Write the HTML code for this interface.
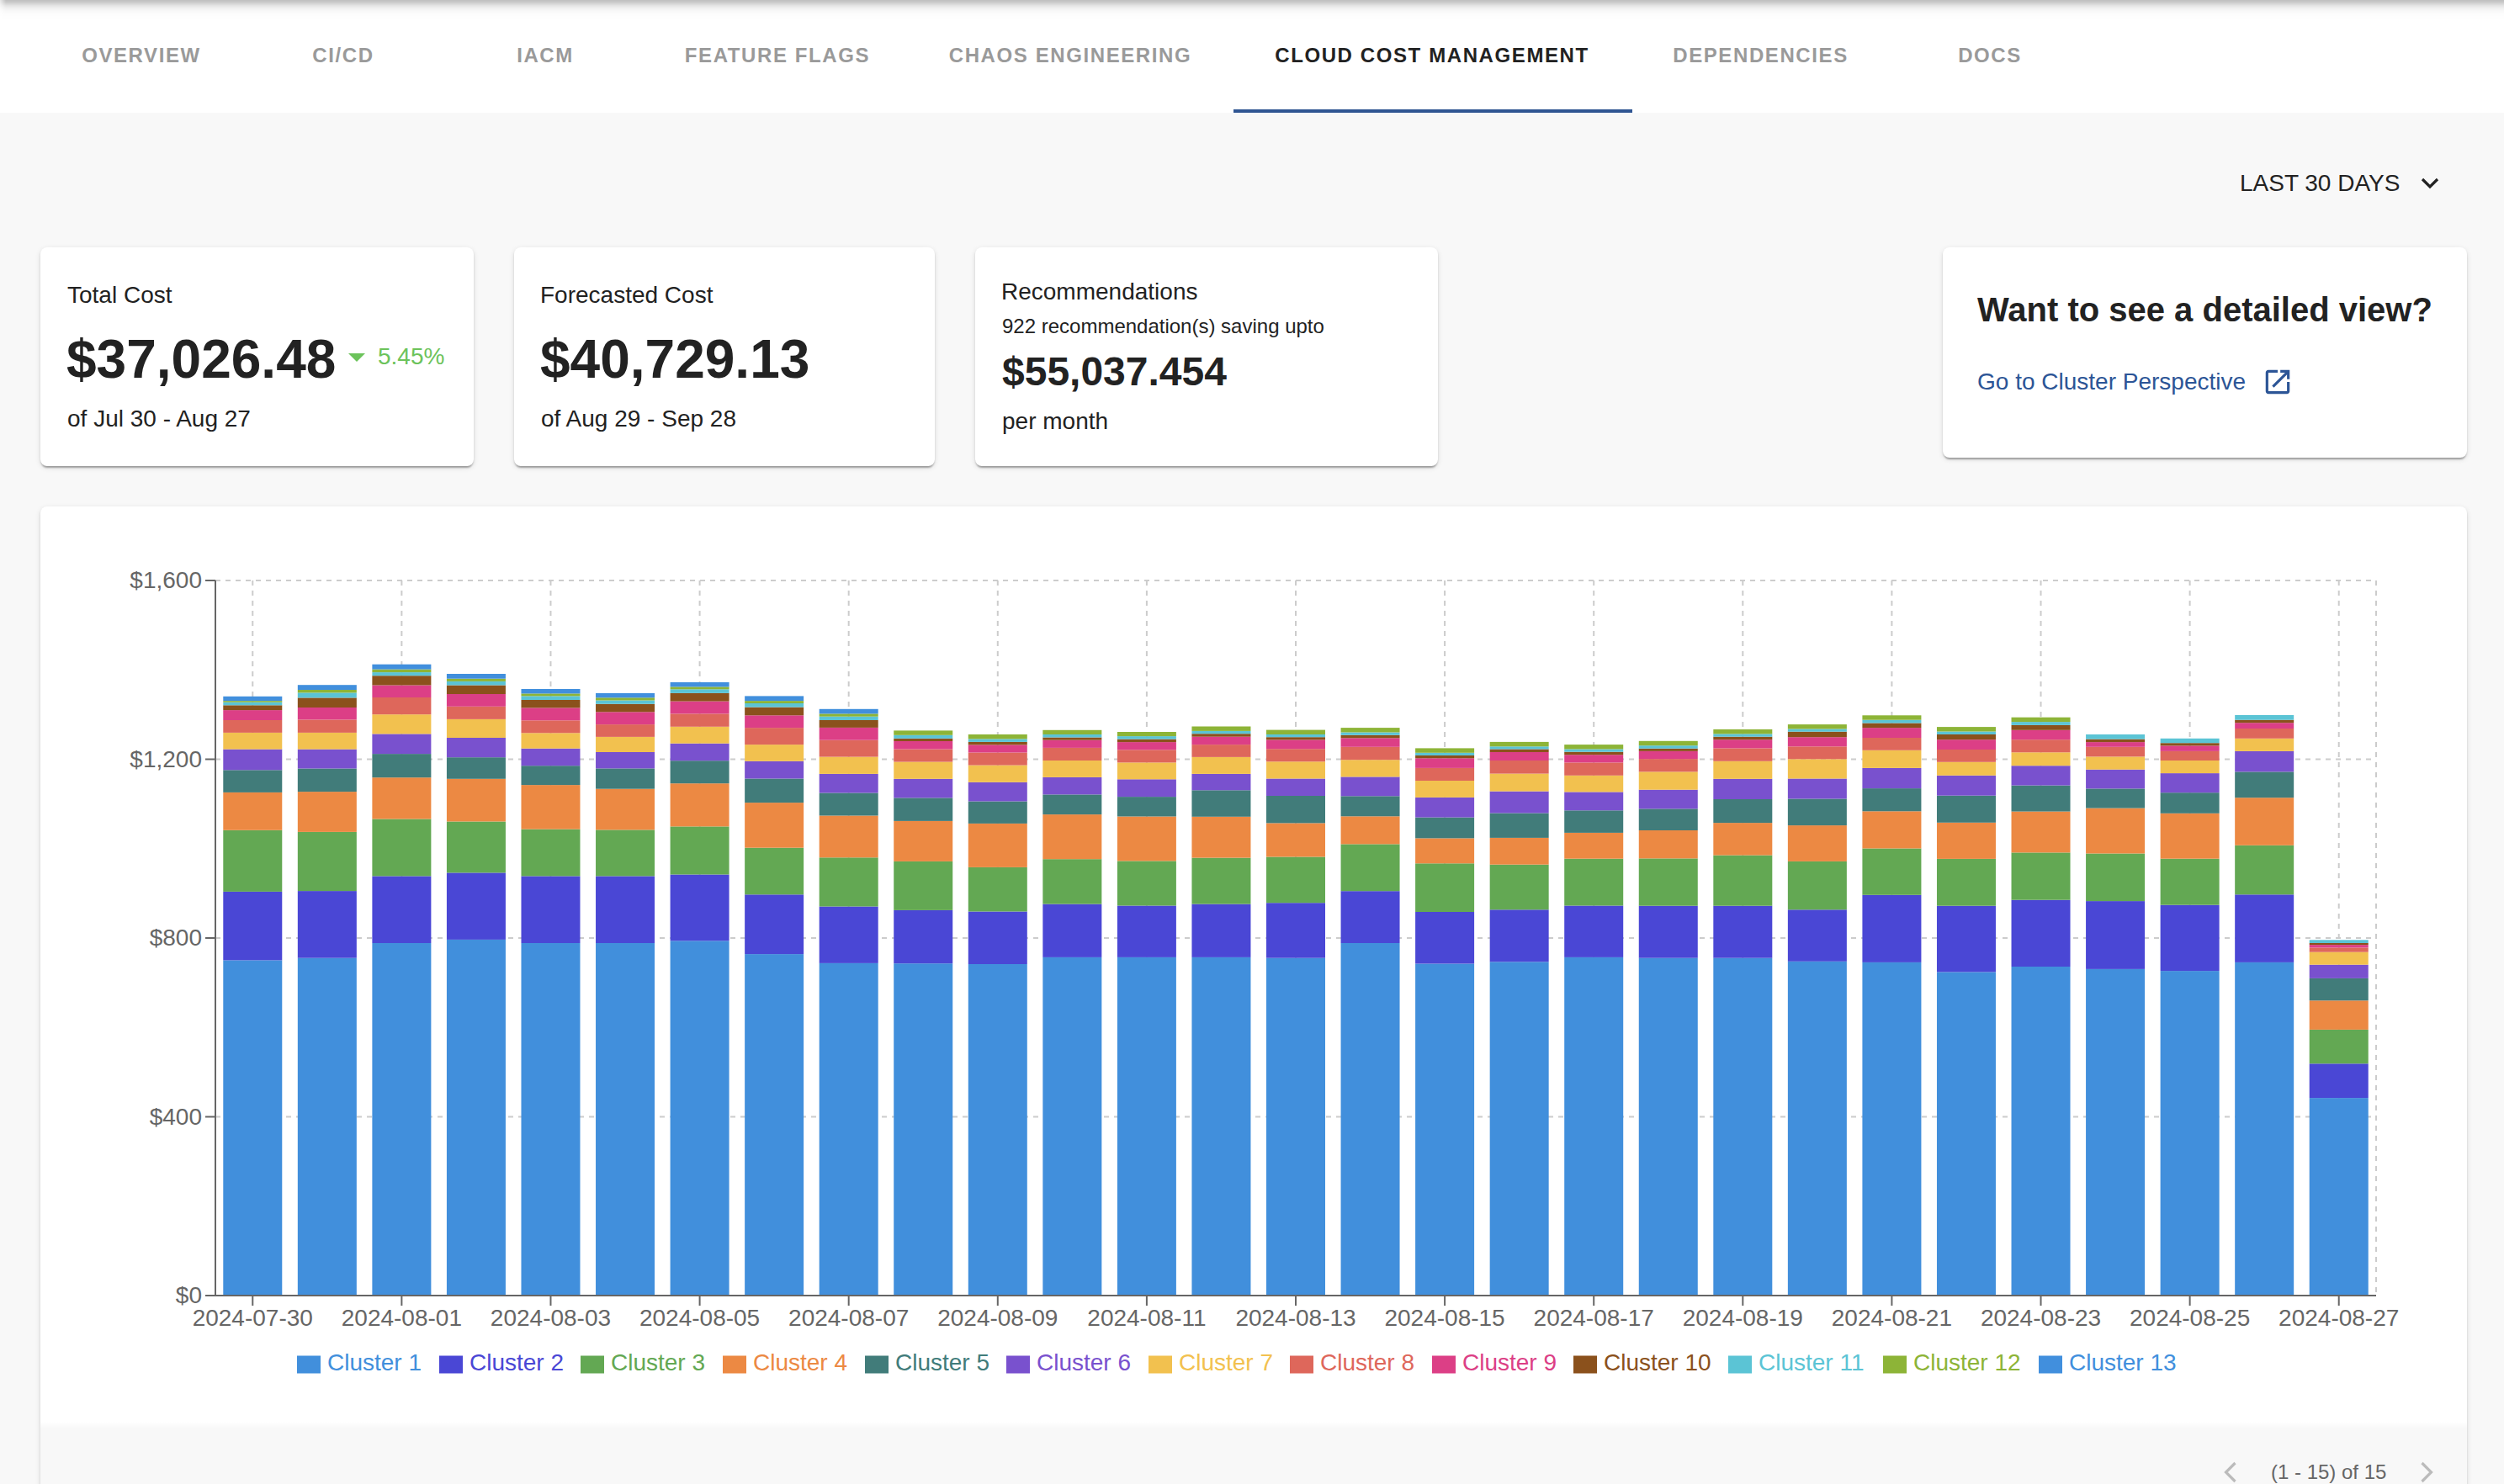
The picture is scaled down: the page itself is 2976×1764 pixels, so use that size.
<!DOCTYPE html>
<html><head><meta charset="utf-8">
<style>
html,body{margin:0;padding:0;}
body{width:2976px;height:1764px;overflow:hidden;position:relative;background:#f8f8f8;font-family:"Liberation Sans",sans-serif;color:#222;}
.abs{position:absolute;white-space:nowrap;}
#hdr{position:absolute;left:0;top:0;width:2976px;height:134px;background:#fff;}
#shadow{position:absolute;left:0;top:0;width:2976px;height:24px;background:linear-gradient(to bottom,rgba(0,0,0,0.25) 0px,rgba(0,0,0,0.21) 2.5px,rgba(0,0,0,0.16) 4.5px,rgba(0,0,0,0.11) 6.5px,rgba(0,0,0,0.075) 8.5px,rgba(0,0,0,0.05) 10.5px,rgba(0,0,0,0.031) 12.5px,rgba(0,0,0,0.02) 14.5px,rgba(0,0,0,0.012) 16.5px,rgba(0,0,0,0.004) 20.5px,rgba(0,0,0,0) 23px);-webkit-mask-image:linear-gradient(to right,rgba(0,0,0,0.35),#000 7px);mask-image:linear-gradient(to right,rgba(0,0,0,0.35),#000 7px);}
.tab{position:absolute;top:0;height:134px;font-size:24px;font-weight:bold;letter-spacing:1.6px;color:#9a9a9a;text-align:center;line-height:24px;}
.tab span{position:absolute;left:0;right:0;top:53.7px;}
.tab.act{color:#222;}
#ul{position:absolute;left:1466px;top:130px;width:474px;height:4px;background:#2f5592;}
.card{position:absolute;background:#fff;border-radius:8px;box-shadow:0 4px 2px -2px rgba(0,0,0,0.2),0 2px 2px 0 rgba(0,0,0,0.14),0 2px 6px 0 rgba(0,0,0,0.12);}
.t28{font-size:28px;line-height:28px;}
.t24{font-size:24px;line-height:24px;}
.big{font-size:64px;line-height:64px;font-weight:bold;}
svg text.ax{font-family:"Liberation Sans",sans-serif;font-size:28px;fill:#666;}
svg text.lg{font-family:"Liberation Sans",sans-serif;font-size:28px;}
@media (max-width:2000px){html{zoom:0.5;}}
</style></head><body>
<div id="hdr"></div>
<div id="shadow"></div>
<div class="tab" style="left:48px;width:240px;"><span>OVERVIEW</span></div>
<div class="tab" style="left:288px;width:240px;"><span>CI/CD</span></div>
<div class="tab" style="left:528px;width:240px;"><span>IACM</span></div>
<div class="tab" style="left:768px;width:312px;"><span>FEATURE FLAGS</span></div>
<div class="tab" style="left:1080px;width:384px;"><span>CHAOS ENGINEERING</span></div>
<div class="tab act" style="left:1464px;width:476px;"><span>CLOUD COST MANAGEMENT</span></div>
<div class="tab" style="left:1940px;width:305px;"><span>DEPENDENCIES</span></div>
<div class="tab" style="left:2245px;width:240px;"><span>DOCS</span></div>
<div id="ul"></div>

<div class="abs t28" style="left:2662px;top:204.3px;">LAST 30 DAYS</div>
<svg class="abs" style="left:2870px;top:202px;" width="36" height="32" viewBox="0 0 36 32"><path d="M9 11 L18 20 L27 11" fill="none" stroke="#222" stroke-width="3.2"/></svg>

<div class="card" style="left:48px;top:294px;width:515px;height:260px;"></div>
<div class="abs t28" style="left:80px;top:337.3px;">Total Cost</div>
<div class="abs big" style="left:79px;top:395.3px;">$37,026.48</div>
<svg class="abs" style="left:414px;top:420px;" width="20" height="10" viewBox="0 0 20 10"><path d="M0 0 H20 L10 10 Z" fill="#6cc35b"/></svg>
<div class="abs t28" style="left:449px;top:410.3px;color:#6cc35b;">5.45%</div>
<div class="abs t28" style="left:80px;top:484.3px;">of Jul 30 - Aug 27</div>

<div class="card" style="left:611px;top:294px;width:500px;height:260px;"></div>
<div class="abs t28" style="left:642px;top:337.3px;">Forecasted Cost</div>
<div class="abs big" style="left:642px;top:395.3px;">$40,729.13</div>
<div class="abs t28" style="left:643px;top:484.3px;">of Aug 29 - Sep 28</div>

<div class="card" style="left:1159px;top:294px;width:550px;height:260px;"></div>
<div class="abs t28" style="left:1190px;top:333.3px;">Recommendations</div>
<div class="abs t24" style="left:1191px;top:375.7px;">922 recommendation(s) saving upto</div>
<div class="abs" style="left:1191px;top:418.4px;font-size:48px;line-height:48px;font-weight:bold;">$55,037.454</div>
<div class="abs t28" style="left:1191px;top:486.8px;">per month</div>

<div class="card" style="left:2309px;top:294px;width:623px;height:250px;"></div>
<div class="abs" style="left:2350px;top:348.1px;font-size:40px;line-height:40px;font-weight:bold;">Want to see a detailed view?</div>
<div class="abs t28" style="left:2350px;top:440.3px;color:#2c5596;">Go to Cluster Perspective</div>
<svg class="abs" style="left:2688px;top:435px;" width="38" height="38" viewBox="0 0 24 24"><path fill="#2c5596" d="M19 19H5V5h7V3H5c-1.11 0-2 .9-2 2v14c0 1.1.89 2 2 2h14c1.1 0 2-.9 2-2v-7h-2v7zM14 3v2h3.59l-9.83 9.83 1.41 1.41L19 6.41V10h2V3h-7z"/></svg>

<div class="card" style="left:48px;top:602px;width:2884px;height:1300px;background:#fff;"></div>
<div class="abs" style="left:48px;top:1690px;width:2884px;height:80px;background:linear-gradient(to bottom,rgba(248,248,248,0) 0px,#f8f8f8 8px);"></div>
<svg class="abs" style="left:0;top:0;" width="2976" height="1764" viewBox="0 0 2976 1764">
<line x1="256.0" y1="690.0" x2="2824.0" y2="690.0" stroke="#ccc" stroke-width="2" stroke-dasharray="6 6"/>
<line x1="256.0" y1="902.5" x2="2824.0" y2="902.5" stroke="#ccc" stroke-width="2" stroke-dasharray="6 6"/>
<line x1="256.0" y1="1115.0" x2="2824.0" y2="1115.0" stroke="#ccc" stroke-width="2" stroke-dasharray="6 6"/>
<line x1="256.0" y1="1327.5" x2="2824.0" y2="1327.5" stroke="#ccc" stroke-width="2" stroke-dasharray="6 6"/>
<line x1="300.28" y1="690.0" x2="300.28" y2="1540.0" stroke="#ccc" stroke-width="2" stroke-dasharray="6 6"/>
<line x1="477.38" y1="690.0" x2="477.38" y2="1540.0" stroke="#ccc" stroke-width="2" stroke-dasharray="6 6"/>
<line x1="654.48" y1="690.0" x2="654.48" y2="1540.0" stroke="#ccc" stroke-width="2" stroke-dasharray="6 6"/>
<line x1="831.59" y1="690.0" x2="831.59" y2="1540.0" stroke="#ccc" stroke-width="2" stroke-dasharray="6 6"/>
<line x1="1008.69" y1="690.0" x2="1008.69" y2="1540.0" stroke="#ccc" stroke-width="2" stroke-dasharray="6 6"/>
<line x1="1185.79" y1="690.0" x2="1185.79" y2="1540.0" stroke="#ccc" stroke-width="2" stroke-dasharray="6 6"/>
<line x1="1362.9" y1="690.0" x2="1362.9" y2="1540.0" stroke="#ccc" stroke-width="2" stroke-dasharray="6 6"/>
<line x1="1540" y1="690.0" x2="1540" y2="1540.0" stroke="#ccc" stroke-width="2" stroke-dasharray="6 6"/>
<line x1="1717.1" y1="690.0" x2="1717.1" y2="1540.0" stroke="#ccc" stroke-width="2" stroke-dasharray="6 6"/>
<line x1="1894.21" y1="690.0" x2="1894.21" y2="1540.0" stroke="#ccc" stroke-width="2" stroke-dasharray="6 6"/>
<line x1="2071.31" y1="690.0" x2="2071.31" y2="1540.0" stroke="#ccc" stroke-width="2" stroke-dasharray="6 6"/>
<line x1="2248.41" y1="690.0" x2="2248.41" y2="1540.0" stroke="#ccc" stroke-width="2" stroke-dasharray="6 6"/>
<line x1="2425.52" y1="690.0" x2="2425.52" y2="1540.0" stroke="#ccc" stroke-width="2" stroke-dasharray="6 6"/>
<line x1="2602.62" y1="690.0" x2="2602.62" y2="1540.0" stroke="#ccc" stroke-width="2" stroke-dasharray="6 6"/>
<line x1="2779.72" y1="690.0" x2="2779.72" y2="1540.0" stroke="#ccc" stroke-width="2" stroke-dasharray="6 6"/>
<line x1="2824.0" y1="690.0" x2="2824.0" y2="1540.0" stroke="#ccc" stroke-width="2" stroke-dasharray="6 6"/>
<rect x="265.28" y="1141.4" width="70" height="398.6" fill="#418fdc"/>
<rect x="265.28" y="1059.9" width="70" height="81.5" fill="#4a47d5"/>
<rect x="265.28" y="986.8" width="70" height="73.1" fill="#63a853"/>
<rect x="265.28" y="941.9" width="70" height="44.9" fill="#ec8943"/>
<rect x="265.28" y="915.3" width="70" height="26.6" fill="#417c7a"/>
<rect x="265.28" y="890.6" width="70" height="24.7" fill="#7951ce"/>
<rect x="265.28" y="870.9" width="70" height="19.7" fill="#f2c14f"/>
<rect x="265.28" y="856" width="70" height="14.9" fill="#de675b"/>
<rect x="265.28" y="844.1" width="70" height="11.9" fill="#dc3f86"/>
<rect x="265.28" y="838.3" width="70" height="5.8" fill="#8b511c"/>
<rect x="265.28" y="834.7" width="70" height="3.6" fill="#5bc4d5"/>
<rect x="265.28" y="833.1" width="70" height="1.6" fill="#8db437"/>
<rect x="265.28" y="827.8" width="70" height="5.3" fill="#418fdd"/>
<rect x="353.83" y="1138.7" width="70" height="401.3" fill="#418fdc"/>
<rect x="353.83" y="1059.1" width="70" height="79.6" fill="#4a47d5"/>
<rect x="353.83" y="988.9" width="70" height="70.2" fill="#63a853"/>
<rect x="353.83" y="941.1" width="70" height="47.8" fill="#ec8943"/>
<rect x="353.83" y="913.5" width="70" height="27.6" fill="#417c7a"/>
<rect x="353.83" y="890.6" width="70" height="22.9" fill="#7951ce"/>
<rect x="353.83" y="870.9" width="70" height="19.7" fill="#f2c14f"/>
<rect x="353.83" y="855.4" width="70" height="15.5" fill="#de675b"/>
<rect x="353.83" y="841" width="70" height="14.4" fill="#dc3f86"/>
<rect x="353.83" y="829.4" width="70" height="11.6" fill="#8b511c"/>
<rect x="353.83" y="823.4" width="70" height="6" fill="#5bc4d5"/>
<rect x="353.83" y="820" width="70" height="3.4" fill="#8db437"/>
<rect x="353.83" y="814.2" width="70" height="5.8" fill="#418fdd"/>
<rect x="442.38" y="1121" width="70" height="419" fill="#418fdc"/>
<rect x="442.38" y="1041.4" width="70" height="79.6" fill="#4a47d5"/>
<rect x="442.38" y="973.5" width="70" height="67.9" fill="#63a853"/>
<rect x="442.38" y="924.2" width="70" height="49.3" fill="#ec8943"/>
<rect x="442.38" y="896.1" width="70" height="28.1" fill="#417c7a"/>
<rect x="442.38" y="872.4" width="70" height="23.7" fill="#7951ce"/>
<rect x="442.38" y="849.2" width="70" height="23.2" fill="#f2c14f"/>
<rect x="442.38" y="829" width="70" height="20.2" fill="#de675b"/>
<rect x="442.38" y="814.5" width="70" height="14.5" fill="#dc3f86"/>
<rect x="442.38" y="803.2" width="70" height="11.3" fill="#8b511c"/>
<rect x="442.38" y="799.1" width="70" height="4.1" fill="#5bc4d5"/>
<rect x="442.38" y="795.6" width="70" height="3.5" fill="#8db437"/>
<rect x="442.38" y="789.7" width="70" height="5.9" fill="#418fdd"/>
<rect x="530.93" y="1116.9" width="70" height="423.1" fill="#418fdc"/>
<rect x="530.93" y="1037.4" width="70" height="79.5" fill="#4a47d5"/>
<rect x="530.93" y="976.5" width="70" height="60.9" fill="#63a853"/>
<rect x="530.93" y="925.8" width="70" height="50.7" fill="#ec8943"/>
<rect x="530.93" y="900.2" width="70" height="25.6" fill="#417c7a"/>
<rect x="530.93" y="877" width="70" height="23.2" fill="#7951ce"/>
<rect x="530.93" y="854.9" width="70" height="22.1" fill="#f2c14f"/>
<rect x="530.93" y="839.8" width="70" height="15.1" fill="#de675b"/>
<rect x="530.93" y="825" width="70" height="14.8" fill="#dc3f86"/>
<rect x="530.93" y="814.5" width="70" height="10.5" fill="#8b511c"/>
<rect x="530.93" y="809.9" width="70" height="4.6" fill="#5bc4d5"/>
<rect x="530.93" y="806.7" width="70" height="3.2" fill="#8db437"/>
<rect x="530.93" y="801" width="70" height="5.7" fill="#418fdd"/>
<rect x="619.48" y="1121" width="70" height="419" fill="#418fdc"/>
<rect x="619.48" y="1041.4" width="70" height="79.6" fill="#4a47d5"/>
<rect x="619.48" y="985.6" width="70" height="55.8" fill="#63a853"/>
<rect x="619.48" y="933.1" width="70" height="52.5" fill="#ec8943"/>
<rect x="619.48" y="910.2" width="70" height="22.9" fill="#417c7a"/>
<rect x="619.48" y="889.7" width="70" height="20.5" fill="#7951ce"/>
<rect x="619.48" y="871.3" width="70" height="18.4" fill="#f2c14f"/>
<rect x="619.48" y="856.3" width="70" height="15" fill="#de675b"/>
<rect x="619.48" y="841.4" width="70" height="14.9" fill="#dc3f86"/>
<rect x="619.48" y="832" width="70" height="9.4" fill="#8b511c"/>
<rect x="619.48" y="827.4" width="70" height="4.6" fill="#5bc4d5"/>
<rect x="619.48" y="824.4" width="70" height="3" fill="#8db437"/>
<rect x="619.48" y="819" width="70" height="5.4" fill="#418fdd"/>
<rect x="708.03" y="1121" width="70" height="419" fill="#418fdc"/>
<rect x="708.03" y="1041.4" width="70" height="79.6" fill="#4a47d5"/>
<rect x="708.03" y="986.4" width="70" height="55" fill="#63a853"/>
<rect x="708.03" y="937.7" width="70" height="48.7" fill="#ec8943"/>
<rect x="708.03" y="913.4" width="70" height="24.3" fill="#417c7a"/>
<rect x="708.03" y="894" width="70" height="19.4" fill="#7951ce"/>
<rect x="708.03" y="875.9" width="70" height="18.1" fill="#f2c14f"/>
<rect x="708.03" y="861.1" width="70" height="14.8" fill="#de675b"/>
<rect x="708.03" y="846.3" width="70" height="14.8" fill="#dc3f86"/>
<rect x="708.03" y="836.8" width="70" height="9.5" fill="#8b511c"/>
<rect x="708.03" y="832.5" width="70" height="4.3" fill="#5bc4d5"/>
<rect x="708.03" y="829.3" width="70" height="3.2" fill="#8db437"/>
<rect x="708.03" y="823.9" width="70" height="5.4" fill="#418fdd"/>
<rect x="796.59" y="1118.3" width="70" height="421.7" fill="#418fdc"/>
<rect x="796.59" y="1039.5" width="70" height="78.8" fill="#4a47d5"/>
<rect x="796.59" y="982.4" width="70" height="57.1" fill="#63a853"/>
<rect x="796.59" y="931.2" width="70" height="51.2" fill="#ec8943"/>
<rect x="796.59" y="904.2" width="70" height="27" fill="#417c7a"/>
<rect x="796.59" y="883.7" width="70" height="20.5" fill="#7951ce"/>
<rect x="796.59" y="863.8" width="70" height="19.9" fill="#f2c14f"/>
<rect x="796.59" y="848.4" width="70" height="15.4" fill="#de675b"/>
<rect x="796.59" y="833.6" width="70" height="14.8" fill="#dc3f86"/>
<rect x="796.59" y="823.9" width="70" height="9.7" fill="#8b511c"/>
<rect x="796.59" y="819.3" width="70" height="4.6" fill="#5bc4d5"/>
<rect x="796.59" y="816.4" width="70" height="2.9" fill="#8db437"/>
<rect x="796.59" y="811" width="70" height="5.4" fill="#418fdd"/>
<rect x="885.14" y="1134.1" width="70" height="405.9" fill="#418fdc"/>
<rect x="885.14" y="1063.3" width="70" height="70.8" fill="#4a47d5"/>
<rect x="885.14" y="1007.7" width="70" height="55.6" fill="#63a853"/>
<rect x="885.14" y="954.1" width="70" height="53.6" fill="#ec8943"/>
<rect x="885.14" y="925.5" width="70" height="28.6" fill="#417c7a"/>
<rect x="885.14" y="904.8" width="70" height="20.7" fill="#7951ce"/>
<rect x="885.14" y="885.1" width="70" height="19.7" fill="#f2c14f"/>
<rect x="885.14" y="865.1" width="70" height="20" fill="#de675b"/>
<rect x="885.14" y="850.3" width="70" height="14.8" fill="#dc3f86"/>
<rect x="885.14" y="840.6" width="70" height="9.7" fill="#8b511c"/>
<rect x="885.14" y="836" width="70" height="4.6" fill="#5bc4d5"/>
<rect x="885.14" y="833.1" width="70" height="2.9" fill="#8db437"/>
<rect x="885.14" y="827.4" width="70" height="5.7" fill="#418fdd"/>
<rect x="973.69" y="1144.9" width="70" height="395.1" fill="#418fdc"/>
<rect x="973.69" y="1077.5" width="70" height="67.4" fill="#4a47d5"/>
<rect x="973.69" y="1019.3" width="70" height="58.2" fill="#63a853"/>
<rect x="973.69" y="969.5" width="70" height="49.8" fill="#ec8943"/>
<rect x="973.69" y="942.5" width="70" height="27" fill="#417c7a"/>
<rect x="973.69" y="919.9" width="70" height="22.6" fill="#7951ce"/>
<rect x="973.69" y="899.6" width="70" height="20.3" fill="#f2c14f"/>
<rect x="973.69" y="879.7" width="70" height="19.9" fill="#de675b"/>
<rect x="973.69" y="864.9" width="70" height="14.8" fill="#dc3f86"/>
<rect x="973.69" y="856" width="70" height="8.9" fill="#8b511c"/>
<rect x="973.69" y="851.7" width="70" height="4.3" fill="#5bc4d5"/>
<rect x="973.69" y="848.4" width="70" height="3.3" fill="#8db437"/>
<rect x="973.69" y="842.8" width="70" height="5.6" fill="#418fdd"/>
<rect x="1062.24" y="1145.2" width="70" height="394.8" fill="#418fdc"/>
<rect x="1062.24" y="1081.9" width="70" height="63.3" fill="#4a47d5"/>
<rect x="1062.24" y="1023.9" width="70" height="58" fill="#63a853"/>
<rect x="1062.24" y="975.9" width="70" height="48" fill="#ec8943"/>
<rect x="1062.24" y="948.4" width="70" height="27.5" fill="#417c7a"/>
<rect x="1062.24" y="925.8" width="70" height="22.6" fill="#7951ce"/>
<rect x="1062.24" y="905.6" width="70" height="20.2" fill="#f2c14f"/>
<rect x="1062.24" y="890.5" width="70" height="15.1" fill="#de675b"/>
<rect x="1062.24" y="881" width="70" height="9.5" fill="#dc3f86"/>
<rect x="1062.24" y="877.8" width="70" height="3.2" fill="#8b511c"/>
<rect x="1062.24" y="873.8" width="70" height="4" fill="#5bc4d5"/>
<rect x="1062.24" y="868.4" width="70" height="5.4" fill="#8db437"/>
<rect x="1150.79" y="1146" width="70" height="394" fill="#418fdc"/>
<rect x="1150.79" y="1083.5" width="70" height="62.5" fill="#4a47d5"/>
<rect x="1150.79" y="1030.9" width="70" height="52.6" fill="#63a853"/>
<rect x="1150.79" y="978.9" width="70" height="52" fill="#ec8943"/>
<rect x="1150.79" y="952.5" width="70" height="26.4" fill="#417c7a"/>
<rect x="1150.79" y="929.8" width="70" height="22.7" fill="#7951ce"/>
<rect x="1150.79" y="909.6" width="70" height="20.2" fill="#f2c14f"/>
<rect x="1150.79" y="894.5" width="70" height="15.1" fill="#de675b"/>
<rect x="1150.79" y="885.4" width="70" height="9.1" fill="#dc3f86"/>
<rect x="1150.79" y="881.9" width="70" height="3.5" fill="#8b511c"/>
<rect x="1150.79" y="878.4" width="70" height="3.5" fill="#5bc4d5"/>
<rect x="1150.79" y="873" width="70" height="5.4" fill="#8db437"/>
<rect x="1239.34" y="1137.9" width="70" height="402.1" fill="#418fdc"/>
<rect x="1239.34" y="1074.6" width="70" height="63.3" fill="#4a47d5"/>
<rect x="1239.34" y="1021.2" width="70" height="53.4" fill="#63a853"/>
<rect x="1239.34" y="968.1" width="70" height="53.1" fill="#ec8943"/>
<rect x="1239.34" y="944.4" width="70" height="23.7" fill="#417c7a"/>
<rect x="1239.34" y="923.9" width="70" height="20.5" fill="#7951ce"/>
<rect x="1239.34" y="904" width="70" height="19.9" fill="#f2c14f"/>
<rect x="1239.34" y="888.9" width="70" height="15.1" fill="#de675b"/>
<rect x="1239.34" y="879.7" width="70" height="9.2" fill="#dc3f86"/>
<rect x="1239.34" y="876.5" width="70" height="3.2" fill="#8b511c"/>
<rect x="1239.34" y="873" width="70" height="3.5" fill="#5bc4d5"/>
<rect x="1239.34" y="867.8" width="70" height="5.2" fill="#8db437"/>
<rect x="1327.9" y="1137.9" width="70" height="402.1" fill="#418fdc"/>
<rect x="1327.9" y="1076.5" width="70" height="61.4" fill="#4a47d5"/>
<rect x="1327.9" y="1023.4" width="70" height="53.1" fill="#63a853"/>
<rect x="1327.9" y="970.5" width="70" height="52.9" fill="#ec8943"/>
<rect x="1327.9" y="947.1" width="70" height="23.4" fill="#417c7a"/>
<rect x="1327.9" y="926.3" width="70" height="20.8" fill="#7951ce"/>
<rect x="1327.9" y="906.4" width="70" height="19.9" fill="#f2c14f"/>
<rect x="1327.9" y="891.3" width="70" height="15.1" fill="#de675b"/>
<rect x="1327.9" y="882.1" width="70" height="9.2" fill="#dc3f86"/>
<rect x="1327.9" y="878.6" width="70" height="3.5" fill="#8b511c"/>
<rect x="1327.9" y="875.1" width="70" height="3.5" fill="#5bc4d5"/>
<rect x="1327.9" y="870" width="70" height="5.1" fill="#8db437"/>
<rect x="1416.45" y="1137.9" width="70" height="402.1" fill="#418fdc"/>
<rect x="1416.45" y="1074.6" width="70" height="63.3" fill="#4a47d5"/>
<rect x="1416.45" y="1019.6" width="70" height="55" fill="#63a853"/>
<rect x="1416.45" y="970.8" width="70" height="48.8" fill="#ec8943"/>
<rect x="1416.45" y="939.3" width="70" height="31.5" fill="#417c7a"/>
<rect x="1416.45" y="919.9" width="70" height="19.4" fill="#7951ce"/>
<rect x="1416.45" y="899.9" width="70" height="20" fill="#f2c14f"/>
<rect x="1416.45" y="885.1" width="70" height="14.8" fill="#de675b"/>
<rect x="1416.45" y="875.7" width="70" height="9.4" fill="#dc3f86"/>
<rect x="1416.45" y="872.2" width="70" height="3.5" fill="#8b511c"/>
<rect x="1416.45" y="868.9" width="70" height="3.3" fill="#5bc4d5"/>
<rect x="1416.45" y="863.5" width="70" height="5.4" fill="#8db437"/>
<rect x="1505" y="1138.7" width="70" height="401.3" fill="#418fdc"/>
<rect x="1505" y="1073.2" width="70" height="65.5" fill="#4a47d5"/>
<rect x="1505" y="1018.5" width="70" height="54.7" fill="#63a853"/>
<rect x="1505" y="978.4" width="70" height="40.1" fill="#ec8943"/>
<rect x="1505" y="946" width="70" height="32.4" fill="#417c7a"/>
<rect x="1505" y="925.5" width="70" height="20.5" fill="#7951ce"/>
<rect x="1505" y="905.3" width="70" height="20.2" fill="#f2c14f"/>
<rect x="1505" y="890.2" width="70" height="15.1" fill="#de675b"/>
<rect x="1505" y="879.4" width="70" height="10.8" fill="#dc3f86"/>
<rect x="1505" y="876.2" width="70" height="3.2" fill="#8b511c"/>
<rect x="1505" y="873" width="70" height="3.2" fill="#5bc4d5"/>
<rect x="1505" y="867.6" width="70" height="5.4" fill="#8db437"/>
<rect x="1593.55" y="1121" width="70" height="419" fill="#418fdc"/>
<rect x="1593.55" y="1059.2" width="70" height="61.8" fill="#4a47d5"/>
<rect x="1593.55" y="1003.4" width="70" height="55.8" fill="#63a853"/>
<rect x="1593.55" y="970.3" width="70" height="33.1" fill="#ec8943"/>
<rect x="1593.55" y="946.3" width="70" height="24" fill="#417c7a"/>
<rect x="1593.55" y="923.4" width="70" height="22.9" fill="#7951ce"/>
<rect x="1593.55" y="903.2" width="70" height="20.2" fill="#f2c14f"/>
<rect x="1593.55" y="887.8" width="70" height="15.4" fill="#de675b"/>
<rect x="1593.55" y="877.3" width="70" height="10.5" fill="#dc3f86"/>
<rect x="1593.55" y="873.8" width="70" height="3.5" fill="#8b511c"/>
<rect x="1593.55" y="870.5" width="70" height="3.3" fill="#5bc4d5"/>
<rect x="1593.55" y="865.1" width="70" height="5.4" fill="#8db437"/>
<rect x="1682.1" y="1145.5" width="70" height="394.5" fill="#418fdc"/>
<rect x="1682.1" y="1084" width="70" height="61.5" fill="#4a47d5"/>
<rect x="1682.1" y="1026.3" width="70" height="57.7" fill="#63a853"/>
<rect x="1682.1" y="996.4" width="70" height="29.9" fill="#ec8943"/>
<rect x="1682.1" y="971.6" width="70" height="24.8" fill="#417c7a"/>
<rect x="1682.1" y="947.9" width="70" height="23.7" fill="#7951ce"/>
<rect x="1682.1" y="928" width="70" height="19.9" fill="#f2c14f"/>
<rect x="1682.1" y="912.9" width="70" height="15.1" fill="#de675b"/>
<rect x="1682.1" y="901.3" width="70" height="11.6" fill="#dc3f86"/>
<rect x="1682.1" y="898" width="70" height="3.3" fill="#8b511c"/>
<rect x="1682.1" y="894.8" width="70" height="3.2" fill="#5bc4d5"/>
<rect x="1682.1" y="889.4" width="70" height="5.4" fill="#8db437"/>
<rect x="1770.66" y="1143.3" width="70" height="396.7" fill="#418fdc"/>
<rect x="1770.66" y="1081.3" width="70" height="62" fill="#4a47d5"/>
<rect x="1770.66" y="1027.7" width="70" height="53.6" fill="#63a853"/>
<rect x="1770.66" y="995.9" width="70" height="31.8" fill="#ec8943"/>
<rect x="1770.66" y="966.5" width="70" height="29.4" fill="#417c7a"/>
<rect x="1770.66" y="940.6" width="70" height="25.9" fill="#7951ce"/>
<rect x="1770.66" y="919.6" width="70" height="21" fill="#f2c14f"/>
<rect x="1770.66" y="904" width="70" height="15.6" fill="#de675b"/>
<rect x="1770.66" y="894" width="70" height="10" fill="#dc3f86"/>
<rect x="1770.66" y="890.5" width="70" height="3.5" fill="#8b511c"/>
<rect x="1770.66" y="887.3" width="70" height="3.2" fill="#5bc4d5"/>
<rect x="1770.66" y="881.9" width="70" height="5.4" fill="#8db437"/>
<rect x="1859.21" y="1137.9" width="70" height="402.1" fill="#418fdc"/>
<rect x="1859.21" y="1076.5" width="70" height="61.4" fill="#4a47d5"/>
<rect x="1859.21" y="1020.7" width="70" height="55.8" fill="#63a853"/>
<rect x="1859.21" y="989.9" width="70" height="30.8" fill="#ec8943"/>
<rect x="1859.21" y="963.3" width="70" height="26.6" fill="#417c7a"/>
<rect x="1859.21" y="941.4" width="70" height="21.9" fill="#7951ce"/>
<rect x="1859.21" y="921.8" width="70" height="19.6" fill="#f2c14f"/>
<rect x="1859.21" y="906.4" width="70" height="15.4" fill="#de675b"/>
<rect x="1859.21" y="897.2" width="70" height="9.2" fill="#dc3f86"/>
<rect x="1859.21" y="893.7" width="70" height="3.5" fill="#8b511c"/>
<rect x="1859.21" y="890.5" width="70" height="3.2" fill="#5bc4d5"/>
<rect x="1859.21" y="885.1" width="70" height="5.4" fill="#8db437"/>
<rect x="1947.76" y="1138.7" width="70" height="401.3" fill="#418fdc"/>
<rect x="1947.76" y="1076.7" width="70" height="62" fill="#4a47d5"/>
<rect x="1947.76" y="1020.4" width="70" height="56.3" fill="#63a853"/>
<rect x="1947.76" y="987" width="70" height="33.4" fill="#ec8943"/>
<rect x="1947.76" y="961.4" width="70" height="25.6" fill="#417c7a"/>
<rect x="1947.76" y="938.7" width="70" height="22.7" fill="#7951ce"/>
<rect x="1947.76" y="917.4" width="70" height="21.3" fill="#f2c14f"/>
<rect x="1947.76" y="902.1" width="70" height="15.3" fill="#de675b"/>
<rect x="1947.76" y="892.9" width="70" height="9.2" fill="#dc3f86"/>
<rect x="1947.76" y="889.7" width="70" height="3.2" fill="#8b511c"/>
<rect x="1947.76" y="886.2" width="70" height="3.5" fill="#5bc4d5"/>
<rect x="1947.76" y="880.8" width="70" height="5.4" fill="#8db437"/>
<rect x="2036.31" y="1138.7" width="70" height="401.3" fill="#418fdc"/>
<rect x="2036.31" y="1076.7" width="70" height="62" fill="#4a47d5"/>
<rect x="2036.31" y="1016.6" width="70" height="60.1" fill="#63a853"/>
<rect x="2036.31" y="978.1" width="70" height="38.5" fill="#ec8943"/>
<rect x="2036.31" y="950" width="70" height="28.1" fill="#417c7a"/>
<rect x="2036.31" y="925.8" width="70" height="24.2" fill="#7951ce"/>
<rect x="2036.31" y="904.8" width="70" height="21" fill="#f2c14f"/>
<rect x="2036.31" y="889.4" width="70" height="15.4" fill="#de675b"/>
<rect x="2036.31" y="879.2" width="70" height="10.2" fill="#dc3f86"/>
<rect x="2036.31" y="875.7" width="70" height="3.5" fill="#8b511c"/>
<rect x="2036.31" y="872.4" width="70" height="3.3" fill="#5bc4d5"/>
<rect x="2036.31" y="867" width="70" height="5.4" fill="#8db437"/>
<rect x="2124.86" y="1142.8" width="70" height="397.2" fill="#418fdc"/>
<rect x="2124.86" y="1081.3" width="70" height="61.5" fill="#4a47d5"/>
<rect x="2124.86" y="1023.9" width="70" height="57.4" fill="#63a853"/>
<rect x="2124.86" y="981.1" width="70" height="42.8" fill="#ec8943"/>
<rect x="2124.86" y="949.5" width="70" height="31.6" fill="#417c7a"/>
<rect x="2124.86" y="925.5" width="70" height="24" fill="#7951ce"/>
<rect x="2124.86" y="902.3" width="70" height="23.2" fill="#f2c14f"/>
<rect x="2124.86" y="887.3" width="70" height="15" fill="#de675b"/>
<rect x="2124.86" y="876.2" width="70" height="11.1" fill="#dc3f86"/>
<rect x="2124.86" y="869.7" width="70" height="6.5" fill="#8b511c"/>
<rect x="2124.86" y="866.5" width="70" height="3.2" fill="#5bc4d5"/>
<rect x="2124.86" y="861.1" width="70" height="5.4" fill="#8db437"/>
<rect x="2213.41" y="1143.9" width="70" height="396.1" fill="#418fdc"/>
<rect x="2213.41" y="1063.8" width="70" height="80.1" fill="#4a47d5"/>
<rect x="2213.41" y="1008.5" width="70" height="55.3" fill="#63a853"/>
<rect x="2213.41" y="964.3" width="70" height="44.2" fill="#ec8943"/>
<rect x="2213.41" y="937.1" width="70" height="27.2" fill="#417c7a"/>
<rect x="2213.41" y="912.9" width="70" height="24.2" fill="#7951ce"/>
<rect x="2213.41" y="891.8" width="70" height="21.1" fill="#f2c14f"/>
<rect x="2213.41" y="877" width="70" height="14.8" fill="#de675b"/>
<rect x="2213.41" y="865.1" width="70" height="11.9" fill="#dc3f86"/>
<rect x="2213.41" y="859.5" width="70" height="5.6" fill="#8b511c"/>
<rect x="2213.41" y="855.7" width="70" height="3.8" fill="#5bc4d5"/>
<rect x="2213.41" y="850.3" width="70" height="5.4" fill="#8db437"/>
<rect x="2301.97" y="1155.4" width="70" height="384.6" fill="#418fdc"/>
<rect x="2301.97" y="1076.7" width="70" height="78.7" fill="#4a47d5"/>
<rect x="2301.97" y="1020.9" width="70" height="55.8" fill="#63a853"/>
<rect x="2301.97" y="977.8" width="70" height="43.1" fill="#ec8943"/>
<rect x="2301.97" y="945.7" width="70" height="32.1" fill="#417c7a"/>
<rect x="2301.97" y="921.8" width="70" height="23.9" fill="#7951ce"/>
<rect x="2301.97" y="905.8" width="70" height="16" fill="#f2c14f"/>
<rect x="2301.97" y="891" width="70" height="14.8" fill="#de675b"/>
<rect x="2301.97" y="879.2" width="70" height="11.8" fill="#dc3f86"/>
<rect x="2301.97" y="873" width="70" height="6.2" fill="#8b511c"/>
<rect x="2301.97" y="869.5" width="70" height="3.5" fill="#5bc4d5"/>
<rect x="2301.97" y="864.1" width="70" height="5.4" fill="#8db437"/>
<rect x="2390.52" y="1149" width="70" height="391" fill="#418fdc"/>
<rect x="2390.52" y="1069.7" width="70" height="79.3" fill="#4a47d5"/>
<rect x="2390.52" y="1013.4" width="70" height="56.3" fill="#63a853"/>
<rect x="2390.52" y="964.6" width="70" height="48.8" fill="#ec8943"/>
<rect x="2390.52" y="933.6" width="70" height="31" fill="#417c7a"/>
<rect x="2390.52" y="910.2" width="70" height="23.4" fill="#7951ce"/>
<rect x="2390.52" y="894.3" width="70" height="15.9" fill="#f2c14f"/>
<rect x="2390.52" y="879.2" width="70" height="15.1" fill="#de675b"/>
<rect x="2390.52" y="867.8" width="70" height="11.4" fill="#dc3f86"/>
<rect x="2390.52" y="861.9" width="70" height="5.9" fill="#8b511c"/>
<rect x="2390.52" y="858.1" width="70" height="3.8" fill="#5bc4d5"/>
<rect x="2390.52" y="852.7" width="70" height="5.4" fill="#8db437"/>
<rect x="2479.07" y="1151.9" width="70" height="388.1" fill="#418fdc"/>
<rect x="2479.07" y="1071.1" width="70" height="80.8" fill="#4a47d5"/>
<rect x="2479.07" y="1014.5" width="70" height="56.6" fill="#63a853"/>
<rect x="2479.07" y="960.6" width="70" height="53.9" fill="#ec8943"/>
<rect x="2479.07" y="937.4" width="70" height="23.2" fill="#417c7a"/>
<rect x="2479.07" y="914.7" width="70" height="22.7" fill="#7951ce"/>
<rect x="2479.07" y="899.4" width="70" height="15.3" fill="#f2c14f"/>
<rect x="2479.07" y="887.8" width="70" height="11.6" fill="#de675b"/>
<rect x="2479.07" y="882.1" width="70" height="5.7" fill="#dc3f86"/>
<rect x="2479.07" y="878.6" width="70" height="3.5" fill="#8b511c"/>
<rect x="2479.07" y="873" width="70" height="5.6" fill="#5bc4d5"/>
<rect x="2567.62" y="1154.1" width="70" height="385.9" fill="#418fdc"/>
<rect x="2567.62" y="1075.7" width="70" height="78.4" fill="#4a47d5"/>
<rect x="2567.62" y="1020.7" width="70" height="55" fill="#63a853"/>
<rect x="2567.62" y="966.8" width="70" height="53.9" fill="#ec8943"/>
<rect x="2567.62" y="942.2" width="70" height="24.6" fill="#417c7a"/>
<rect x="2567.62" y="919.1" width="70" height="23.1" fill="#7951ce"/>
<rect x="2567.62" y="904" width="70" height="15.1" fill="#f2c14f"/>
<rect x="2567.62" y="892.9" width="70" height="11.1" fill="#de675b"/>
<rect x="2567.62" y="886.4" width="70" height="6.5" fill="#dc3f86"/>
<rect x="2567.62" y="883.2" width="70" height="3.2" fill="#8b511c"/>
<rect x="2567.62" y="877.8" width="70" height="5.4" fill="#5bc4d5"/>
<rect x="2656.17" y="1143.9" width="70" height="396.1" fill="#418fdc"/>
<rect x="2656.17" y="1063.3" width="70" height="80.6" fill="#4a47d5"/>
<rect x="2656.17" y="1004.8" width="70" height="58.5" fill="#63a853"/>
<rect x="2656.17" y="948.2" width="70" height="56.6" fill="#ec8943"/>
<rect x="2656.17" y="917.4" width="70" height="30.8" fill="#417c7a"/>
<rect x="2656.17" y="892.9" width="70" height="24.5" fill="#7951ce"/>
<rect x="2656.17" y="877.8" width="70" height="15.1" fill="#f2c14f"/>
<rect x="2656.17" y="866" width="70" height="11.8" fill="#de675b"/>
<rect x="2656.17" y="859.2" width="70" height="6.8" fill="#dc3f86"/>
<rect x="2656.17" y="855.7" width="70" height="3.5" fill="#8b511c"/>
<rect x="2656.17" y="850" width="70" height="5.7" fill="#5bc4d5"/>
<rect x="2744.72" y="1305.1" width="70" height="234.9" fill="#418fdc"/>
<rect x="2744.72" y="1264.3" width="70" height="40.8" fill="#4a47d5"/>
<rect x="2744.72" y="1223.9" width="70" height="40.4" fill="#63a853"/>
<rect x="2744.72" y="1189.3" width="70" height="34.6" fill="#ec8943"/>
<rect x="2744.72" y="1162.9" width="70" height="26.4" fill="#417c7a"/>
<rect x="2744.72" y="1146.7" width="70" height="16.2" fill="#7951ce"/>
<rect x="2744.72" y="1131.7" width="70" height="15" fill="#f2c14f"/>
<rect x="2744.72" y="1126.4" width="70" height="5.3" fill="#de675b"/>
<rect x="2744.72" y="1123.1" width="70" height="3.3" fill="#dc3f86"/>
<rect x="2744.72" y="1121" width="70" height="2.1" fill="#8b511c"/>
<rect x="2744.72" y="1117.3" width="70" height="3.7" fill="#5bc4d5"/>
<line x1="256.0" y1="690.0" x2="256.0" y2="1540.0" stroke="#666" stroke-width="2"/>
<line x1="256.0" y1="1540.0" x2="2824.0" y2="1540.0" stroke="#666" stroke-width="2"/>
<line x1="244" y1="690.0" x2="256.0" y2="690.0" stroke="#666" stroke-width="2"/>
<text x="240" y="699" text-anchor="end" class="ax">$1,600</text>
<line x1="244" y1="902.5" x2="256.0" y2="902.5" stroke="#666" stroke-width="2"/>
<text x="240" y="911.5" text-anchor="end" class="ax">$1,200</text>
<line x1="244" y1="1115.0" x2="256.0" y2="1115.0" stroke="#666" stroke-width="2"/>
<text x="240" y="1124" text-anchor="end" class="ax">$800</text>
<line x1="244" y1="1327.5" x2="256.0" y2="1327.5" stroke="#666" stroke-width="2"/>
<text x="240" y="1336.5" text-anchor="end" class="ax">$400</text>
<line x1="244" y1="1540.0" x2="256.0" y2="1540.0" stroke="#666" stroke-width="2"/>
<text x="240" y="1549" text-anchor="end" class="ax">$0</text>
<line x1="300.28" y1="1540.0" x2="300.28" y2="1552" stroke="#666" stroke-width="2"/>
<text x="300.28" y="1576" text-anchor="middle" class="ax">2024-07-30</text>
<line x1="477.38" y1="1540.0" x2="477.38" y2="1552" stroke="#666" stroke-width="2"/>
<text x="477.38" y="1576" text-anchor="middle" class="ax">2024-08-01</text>
<line x1="654.48" y1="1540.0" x2="654.48" y2="1552" stroke="#666" stroke-width="2"/>
<text x="654.48" y="1576" text-anchor="middle" class="ax">2024-08-03</text>
<line x1="831.59" y1="1540.0" x2="831.59" y2="1552" stroke="#666" stroke-width="2"/>
<text x="831.59" y="1576" text-anchor="middle" class="ax">2024-08-05</text>
<line x1="1008.69" y1="1540.0" x2="1008.69" y2="1552" stroke="#666" stroke-width="2"/>
<text x="1008.69" y="1576" text-anchor="middle" class="ax">2024-08-07</text>
<line x1="1185.79" y1="1540.0" x2="1185.79" y2="1552" stroke="#666" stroke-width="2"/>
<text x="1185.79" y="1576" text-anchor="middle" class="ax">2024-08-09</text>
<line x1="1362.9" y1="1540.0" x2="1362.9" y2="1552" stroke="#666" stroke-width="2"/>
<text x="1362.9" y="1576" text-anchor="middle" class="ax">2024-08-11</text>
<line x1="1540" y1="1540.0" x2="1540" y2="1552" stroke="#666" stroke-width="2"/>
<text x="1540" y="1576" text-anchor="middle" class="ax">2024-08-13</text>
<line x1="1717.1" y1="1540.0" x2="1717.1" y2="1552" stroke="#666" stroke-width="2"/>
<text x="1717.1" y="1576" text-anchor="middle" class="ax">2024-08-15</text>
<line x1="1894.21" y1="1540.0" x2="1894.21" y2="1552" stroke="#666" stroke-width="2"/>
<text x="1894.21" y="1576" text-anchor="middle" class="ax">2024-08-17</text>
<line x1="2071.31" y1="1540.0" x2="2071.31" y2="1552" stroke="#666" stroke-width="2"/>
<text x="2071.31" y="1576" text-anchor="middle" class="ax">2024-08-19</text>
<line x1="2248.41" y1="1540.0" x2="2248.41" y2="1552" stroke="#666" stroke-width="2"/>
<text x="2248.41" y="1576" text-anchor="middle" class="ax">2024-08-21</text>
<line x1="2425.52" y1="1540.0" x2="2425.52" y2="1552" stroke="#666" stroke-width="2"/>
<text x="2425.52" y="1576" text-anchor="middle" class="ax">2024-08-23</text>
<line x1="2602.62" y1="1540.0" x2="2602.62" y2="1552" stroke="#666" stroke-width="2"/>
<text x="2602.62" y="1576" text-anchor="middle" class="ax">2024-08-25</text>
<line x1="2779.72" y1="1540.0" x2="2779.72" y2="1552" stroke="#666" stroke-width="2"/>
<text x="2779.72" y="1576" text-anchor="middle" class="ax">2024-08-27</text>
<rect x="353" y="1611.5" width="28" height="21" fill="#418fdc"/>
<text x="389" y="1629" class="lg" fill="#418fdc">Cluster 1</text>
<rect x="522" y="1611.5" width="28" height="21" fill="#4a47d5"/>
<text x="558" y="1629" class="lg" fill="#4a47d5">Cluster 2</text>
<rect x="690" y="1611.5" width="28" height="21" fill="#63a853"/>
<text x="726" y="1629" class="lg" fill="#63a853">Cluster 3</text>
<rect x="859" y="1611.5" width="28" height="21" fill="#ec8943"/>
<text x="895" y="1629" class="lg" fill="#ec8943">Cluster 4</text>
<rect x="1028" y="1611.5" width="28" height="21" fill="#417c7a"/>
<text x="1064" y="1629" class="lg" fill="#417c7a">Cluster 5</text>
<rect x="1196" y="1611.5" width="28" height="21" fill="#7951ce"/>
<text x="1232" y="1629" class="lg" fill="#7951ce">Cluster 6</text>
<rect x="1365" y="1611.5" width="28" height="21" fill="#f2c14f"/>
<text x="1401" y="1629" class="lg" fill="#f2c14f">Cluster 7</text>
<rect x="1533" y="1611.5" width="28" height="21" fill="#de675b"/>
<text x="1569" y="1629" class="lg" fill="#de675b">Cluster 8</text>
<rect x="1702" y="1611.5" width="28" height="21" fill="#dc3f86"/>
<text x="1738" y="1629" class="lg" fill="#dc3f86">Cluster 9</text>
<rect x="1870" y="1611.5" width="28" height="21" fill="#8b511c"/>
<text x="1906" y="1629" class="lg" fill="#8b511c">Cluster 10</text>
<rect x="2054" y="1611.5" width="28" height="21" fill="#5bc4d5"/>
<text x="2090" y="1629" class="lg" fill="#5bc4d5">Cluster 11</text>
<rect x="2238" y="1611.5" width="28" height="21" fill="#8db437"/>
<text x="2274" y="1629" class="lg" fill="#8db437">Cluster 12</text>
<rect x="2423" y="1611.5" width="28" height="21" fill="#418fdd"/>
<text x="2459" y="1629" class="lg" fill="#418fdd">Cluster 13</text>
</svg>
<svg class="abs" style="left:2636px;top:1734px;" width="30" height="32" viewBox="0 0 30 32"><path d="M20.5 5 L9.5 16 L20.5 27" fill="none" stroke="#bbb" stroke-width="3.2"/></svg>
<div class="abs t24" style="left:2699px;top:1737.7px;color:#666;">(1 - 15) of 15</div>
<svg class="abs" style="left:2869px;top:1734px;" width="30" height="32" viewBox="0 0 30 32"><path d="M9.5 5 L20.5 16 L9.5 27" fill="none" stroke="#bbb" stroke-width="3.2"/></svg>
</body></html>
